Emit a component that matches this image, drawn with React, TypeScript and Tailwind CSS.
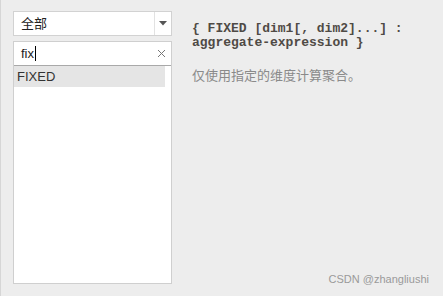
const App = () => (
  <div className="flex h-[296px] w-[443px] border-l border-[#d6d6d6] bg-[#ededed] font-['Liberation_Sans','Noto_Sans_CJK_SC',sans-serif]">
    <div className="flex w-[171px] shrink-0 flex-col pt-[11px] pl-[12px] pb-[12px]">
      <div className="flex h-[25px] items-stretch border border-[#d2d2d2] bg-white">
        <div className="flex flex-1 items-center pl-[7px] text-[13px] text-[#222]">全部</div>
        <div className="flex w-[17px] items-center justify-center border-l border-[#e2e2e2]">
          <svg width="8" height="5" viewBox="0 0 8 5">
            <path d="M0 0h8L4 4.5z" fill="#555" />
          </svg>
        </div>
      </div>
      <div className="mt-[5px] flex flex-1 flex-col border border-[#cfcfcf] bg-white">
        <div className="flex h-[24px] items-center border-b border-[#a9a9a9] pl-[7px] pr-[5px]">
          <span className="text-[13px] text-[#222]">fix</span>
          <span className="ml-[1px] h-[15px] w-px bg-black" />
          <svg className="ml-auto" width="9" height="9" viewBox="0 0 9 9">
            <path d="M1 1l7 7M8 1L1 8" stroke="#777" strokeWidth="1" />
          </svg>
        </div>
        <div className="mr-[6px] flex h-[21px] items-center bg-[#e5e5e5] pl-[3px] text-[13px] text-[#333]">FIXED</div>
      </div>
    </div>
    <div className="flex flex-1 flex-col pt-[22px] pl-[20px] pr-[14px] pb-[9px]">
      <div className="font-['Liberation_Mono',monospace] text-[13px] leading-[14px] font-bold text-[#4f4a45]">
        <div>{'{ FIXED [dim1[, dim2]...] :'}</div>
        <div>{'aggregate-expression }'}</div>
      </div>
      <div className="mt-[18px] text-[13px] leading-[16px] text-[#8a8a8a]">仅使用指定的维度计算聚合。</div>
      <div className="mt-auto text-right text-[11px] text-[#9a9a9a]">CSDN @zhangliushi</div>
    </div>
  </div>
);

export default App;
